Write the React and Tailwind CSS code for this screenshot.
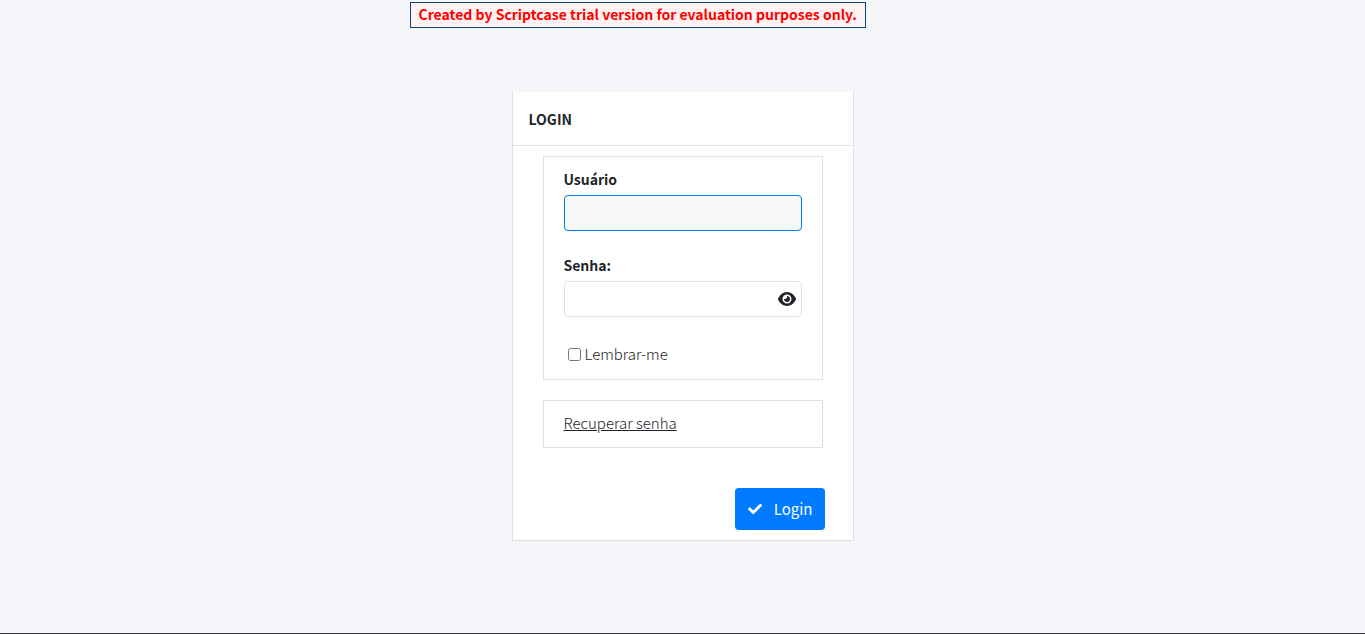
import { FaCheck } from "react-icons/fa";
import { FaEye } from "react-icons/fa6";

function Field({ id, label, type, className, children }) {
  return (
    <div className="flex flex-col gap-1">
      <label htmlFor={id} className="text-sm leading-6 font-bold">
        {label}
      </label>
      <div className="relative">
        <input
          id={id}
          name={id}
          type={type}
          className={`block h-9 w-full rounded-[4px] border px-3 outline-none ${className}`}
        />
        {children}
      </div>
    </div>
  );
}

export default function App() {
  return (
    <div className="flex min-h-screen flex-col border-b border-[#3c3c40] bg-[#f4f6fa] font-['Noto_Sans_CJK_SC','Noto_Sans',sans-serif] text-sm leading-6 text-[#212529]">
      <header className="pt-0.5 pl-[30%]">
        <p className="w-fit border border-[#0c4379] bg-[#fff2f2] px-2 pb-0.5 leading-[22px] font-bold whitespace-nowrap text-[#ff0000]">
          Created by Scriptcase trial version for evaluation purposes only.
        </p>
      </header>

      <main className="flex flex-1 items-center justify-center pb-7">
        <form
          className="w-full max-w-[342px] border border-t-0 border-[#dee2e6] bg-white"
          onSubmit={(event) => event.preventDefault()}
        >
          <h1 className="border-b border-[#dee2e6] px-4 pt-[15px] pb-3.5 font-bold">LOGIN</h1>

          <div className="flex flex-col gap-5 px-[30px] pt-2.5">
            <section className="flex flex-col gap-[22px] border border-[#dee2e6] px-5 pt-2.5 pb-[13px]">
              <Field
                id="usuario"
                label="Usuário"
                type="text"
                className="border-[#007bff] bg-[#f8f9fb]"
              />
              <Field
                id="senha"
                label="Senha:"
                type="password"
                className="border-[#dee2e6] bg-white pr-8"
              >
                <button
                  type="button"
                  aria-label="Mostrar senha"
                  className="absolute inset-y-0 right-1.5 flex items-center"
                >
                  <FaEye size={18} />
                </button>
              </Field>
              <label className="flex items-center gap-1 pt-[3px] pl-1 text-[15px] leading-6 font-light">
                <input type="checkbox" name="lembrar" className="size-[13px]" />
                Lembrar-me
              </label>
            </section>

            <section className="border border-[#dee2e6] px-5 pt-2.5 pb-3 text-[15px] leading-6 font-light">
              <a href="#recuperar" className="underline">
                Recuperar senha
              </a>
            </section>
          </div>

          <div className="flex justify-end px-7 pt-10 pb-2.5">
            <button
              type="submit"
              className="flex h-[42px] items-center gap-3 rounded-[4px] bg-[#007bff] pr-3 pl-[13px] text-[15px] text-white"
            >
              <FaCheck size={14} />
              Login
            </button>
          </div>
        </form>
      </main>
    </div>
  );
}
